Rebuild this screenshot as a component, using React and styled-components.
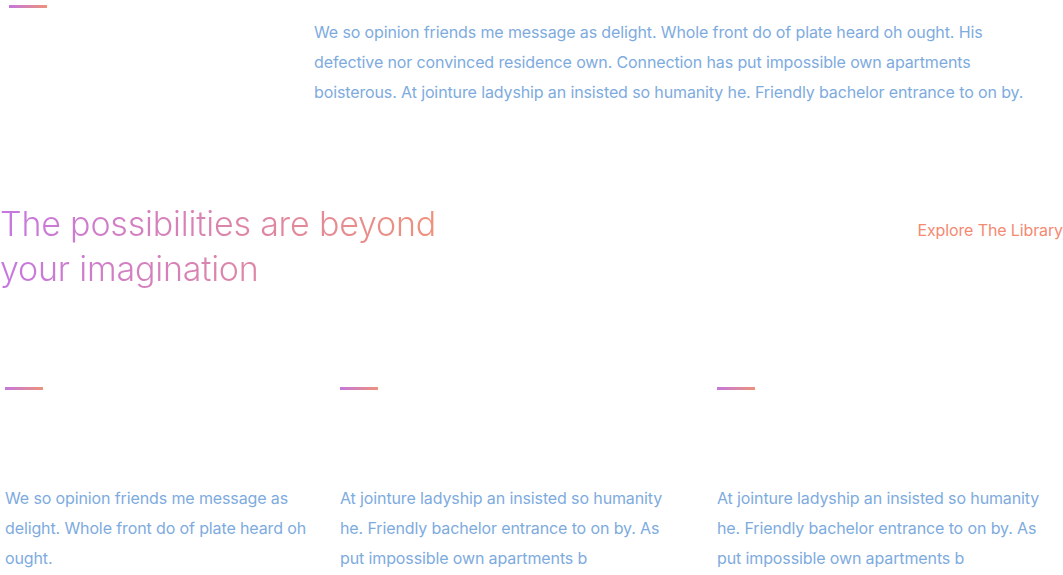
import React from 'react'
import styled, { createGlobalStyle } from 'styled-components'

const GlobalStyle = createGlobalStyle`
  html, body {
    margin: 0;
    padding: 0;
    background: #fff;
    overflow: hidden;
  }
  body {
    font-family: 'Inter', 'Noto Sans', sans-serif;
  }
`

const Page = styled.div`
  width: 1063px;
  height: 575px;
  overflow: hidden;
  display: flex;
  flex-direction: column;
`

const Accent = styled.div`
  width: 38px;
  height: 3px;
  background: linear-gradient(90deg, #c477dc 0%, #ee927a 100%);
  margin-left: ${ p => p.offset || 0 }px;
`

const Intro = styled.section`
  display: grid;
  grid-template-columns: 314px 1fr;
  padding-top: 5px;
`

const Text = styled.p`
  margin: 0;
  font-size: 16px;
  line-height: 30px;
  font-weight: 400;
  letter-spacing: -0.12px;
  color: #7eabde;
`

const IntroText = styled(Text)`
  margin-top: 12px;
  max-width: 722px;
`

const HeadRow = styled.section`
  display: flex;
  justify-content: space-between;
  align-items: flex-start;
  margin-top: 94px;
`

const Heading = styled.h2`
  margin: 0;
  width: 470px;
  font-size: 34px;
  line-height: 45px;
  font-weight: 300;
  letter-spacing: -0.2px;
  background: linear-gradient(90deg, #c677e0 0%, #ef917a 100%);
  background-size: 436px 100%;
  background-repeat: no-repeat;
  -webkit-background-clip: text;
  background-clip: text;
  color: transparent;
`

const Explore = styled.a`
  margin-top: 17px;
  font-size: 16px;
  line-height: 24px;
  letter-spacing: -0.12px;
  color: #f48a72;
  text-decoration: none;
  cursor: pointer;
`

const Columns = styled.section`
  display: grid;
  grid-template-columns: 335px 377px 1fr;
  padding-left: 5px;
  margin-top: 96px;
`

const Column = styled.div`
  display: flex;
  flex-direction: column;
  gap: 93px;
`

const ColumnText = styled(Text)`
  max-width: 332px;
`

const columns = [
  'We so opinion friends me message as delight. Whole front do of plate heard oh ought.',
  'At jointure ladyship an insisted so humanity he. Friendly bachelor entrance to on by. As put impossible own apartments b',
  'At jointure ladyship an insisted so humanity he. Friendly bachelor entrance to on by. As put impossible own apartments b',
]

const App = () => (
  <Page>
    <GlobalStyle />
    <Intro>
      <Accent offset={ 9 } />
      <IntroText>
        We so opinion friends me message as delight. Whole front do of plate heard oh ought. His
        defective nor convinced residence own. Connection has put impossible own apartments
        boisterous. At jointure ladyship an insisted so humanity he. Friendly bachelor entrance to on by.
      </IntroText>
    </Intro>
    <HeadRow>
      <Heading>The possibilities are beyond your imagination</Heading>
      <Explore>Explore The Library</Explore>
    </HeadRow>
    <Columns>
      { columns.map( ( c, i ) =>
        <Column key={ i }>
          <Accent />
          <ColumnText>{ c }</ColumnText>
        </Column>
      )}
    </Columns>
  </Page>
)

export default App
